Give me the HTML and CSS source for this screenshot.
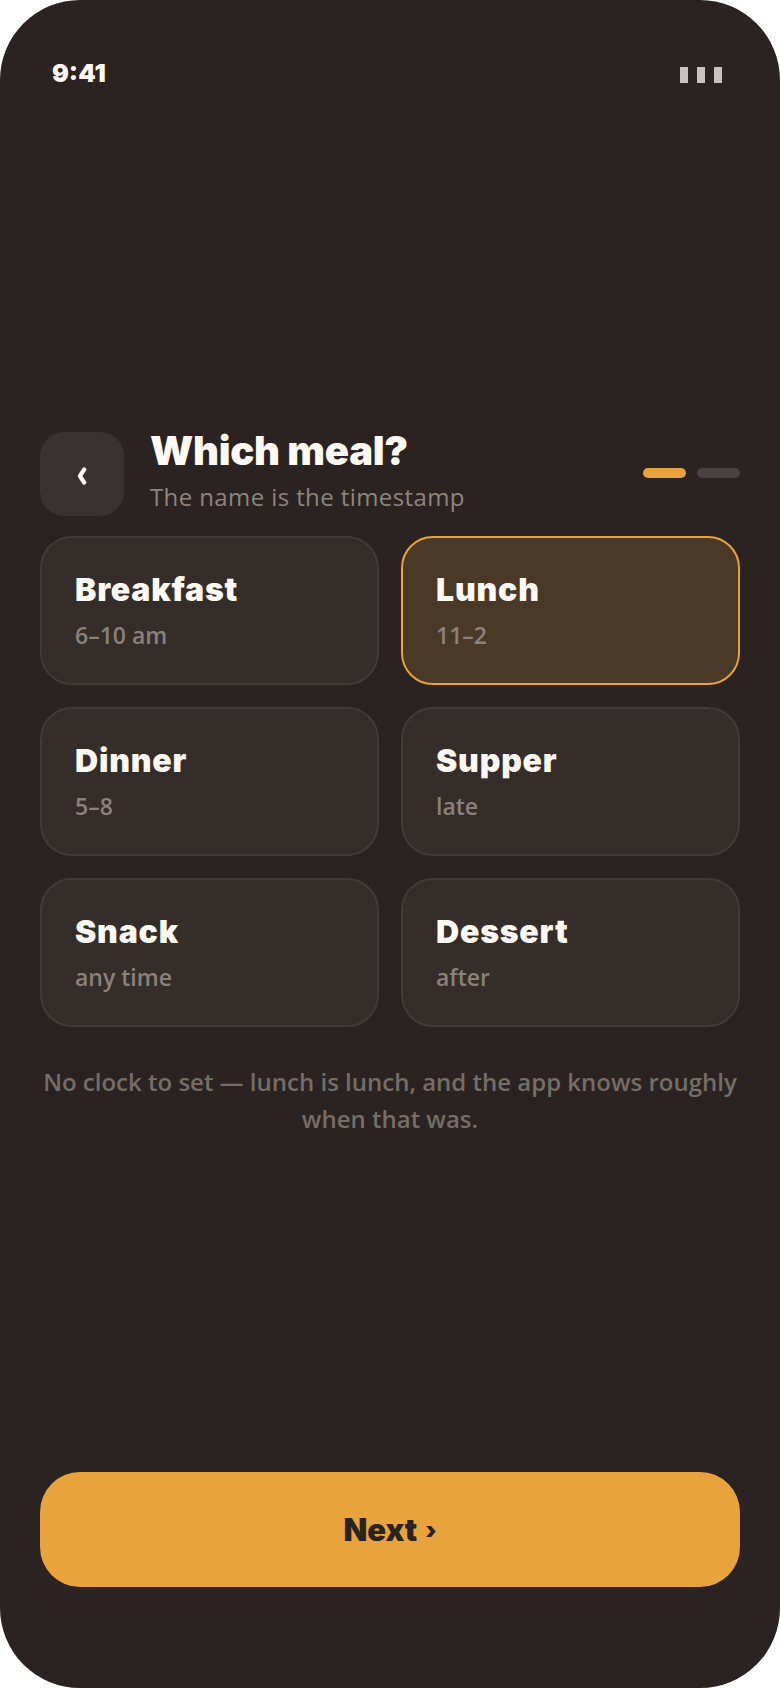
FILE: index.html
```html
<!DOCTYPE html>
<html lang="en">
<head>
<meta charset="utf-8">
<title>Which meal?</title>
<link rel="stylesheet" href="styles.css">
</head>
<body>
<div class="phone">
  <div class="status">
    <span class="time">9:41</span>
    <div class="bars"><span></span><span></span><span></span></div>
  </div>
  <div class="main">
    <div class="header">
      <button class="back" aria-label="Back">
        <svg width="10" height="18" viewBox="0 0 10 18"><path d="M7.2 2.5 Q4 7 3 9 Q4 11 7.2 15.5" fill="none" stroke="#fdf8f2" stroke-width="4.2" stroke-linecap="round" stroke-linejoin="round"/></svg>
      </button>
      <div class="titles">
        <h1 class="title">Which meal?</h1>
        <p class="subtitle">The name is the timestamp</p>
      </div>
      <div class="dots"><span class="dot on"></span><span class="dot"></span></div>
    </div>
    <div class="grid">
      <div class="card"><div class="card-title">Breakfast</div><div class="card-sub">6–10 am</div></div>
      <div class="card selected"><div class="card-title">Lunch</div><div class="card-sub">11–2</div></div>
      <div class="card"><div class="card-title">Dinner</div><div class="card-sub">5–8</div></div>
      <div class="card"><div class="card-title">Supper</div><div class="card-sub">late</div></div>
      <div class="card"><div class="card-title">Snack</div><div class="card-sub">any time</div></div>
      <div class="card"><div class="card-title">Dessert</div><div class="card-sub">after</div></div>
    </div>
    <p class="note">No clock to set — lunch is lunch, and the app knows roughly when that was.</p>
  </div>
  <button class="next">Next <span class="chev">›</span></button>
</div>
</body>
</html>
```
FILE: styles.css
```css
html, body {
  margin: 0;
  padding: 0;
  background: #ffffff;
}

.phone {
  width: 780px;
  height: 1688px;
  box-sizing: border-box;
  border-radius: 80px;
  background: #2b2321;
  display: flex;
  flex-direction: column;
  padding: 58px 40px 101px;
  overflow: hidden;
  font-family: "Open Sans", "Noto Sans", sans-serif;
}

.status {
  height: 30px;
  display: flex;
  justify-content: space-between;
  align-items: center;
  padding: 0 18px 0 12px;
}

.time {
  font-family: Inter, "Liberation Sans", sans-serif;
  font-weight: 900;
  font-size: 25px;
  line-height: 30px;
  color: #fdf8f2;
}

.bars {
  display: flex;
  gap: 9px;
  margin-top: 3px;
}

.bars span {
  width: 8px;
  height: 16px;
  background: #c9c3bd;
}

.main {
  flex: 1;
  display: flex;
  flex-direction: column;
  justify-content: center;
  padding-top: 6px;
}

.header {
  display: flex;
  align-items: flex-start;
  gap: 26px;
}

.back {
  width: 84px;
  height: 84px;
  margin-top: 2.5px;
  flex: none;
  border: none;
  border-radius: 24px;
  background: #3a3230;
  display: flex;
  align-items: center;
  justify-content: center;
  padding: 4px 0 0;
}

.back svg {
  display: block;
}

.titles {
  flex: 1;
}

.title {
  margin: 0;
  font-family: Inter, "Liberation Sans", sans-serif;
  font-weight: 900;
  font-size: 40px;
  line-height: 44px;
  color: #fdf8f2;
  letter-spacing: -0.3px;
}

.subtitle {
  margin: 9px 0 0;
  font-size: 24px;
  line-height: 30px;
  letter-spacing: 0.4px;
  color: #8d857f;
}

.dots {
  align-self: center;
  display: flex;
  gap: 11px;
}

.dot {
  width: 43px;
  height: 10px;
  border-radius: 5px;
  background: #4a4240;
}

.dot.on {
  background: #e8a23b;
}

.grid {
  margin-top: 20px;
  display: grid;
  grid-template-columns: 1fr 1fr;
  gap: 22px;
}

.card {
  height: 149px;
  box-sizing: border-box;
  border: 2px solid #433a37;
  border-radius: 32px;
  background: #352d2a;
  padding: 33px 33px;
}

.card.selected {
  background: #4a3927;
  border-color: #e8a23b;
}

.card-title {
  font-family: Inter, "Liberation Sans", sans-serif;
  font-weight: 900;
  font-size: 32px;
  line-height: 38px;
  letter-spacing: 0.8px;
  color: #fdf8f2;
}

.card-sub {
  margin-top: 11px;
  font-size: 23px;
  font-weight: 600;
  line-height: 30px;
  color: #8a817b;
}

.note {
  margin: 36px 0 0;
  text-align: center;
  font-size: 24px;
  font-weight: 600;
  line-height: 37px;
  color: #756d67;
}

.next {
  height: 115px;
  flex: none;
  border: none;
  border-radius: 40px;
  background: #e8a33c;
  color: #2b2321;
  font-family: Inter, "Liberation Sans", sans-serif;
  font-weight: 900;
  font-size: 31px;
}

.chev {
  font-size: 24px;
  vertical-align: 2px;
  margin-left: 2px;
}
```
